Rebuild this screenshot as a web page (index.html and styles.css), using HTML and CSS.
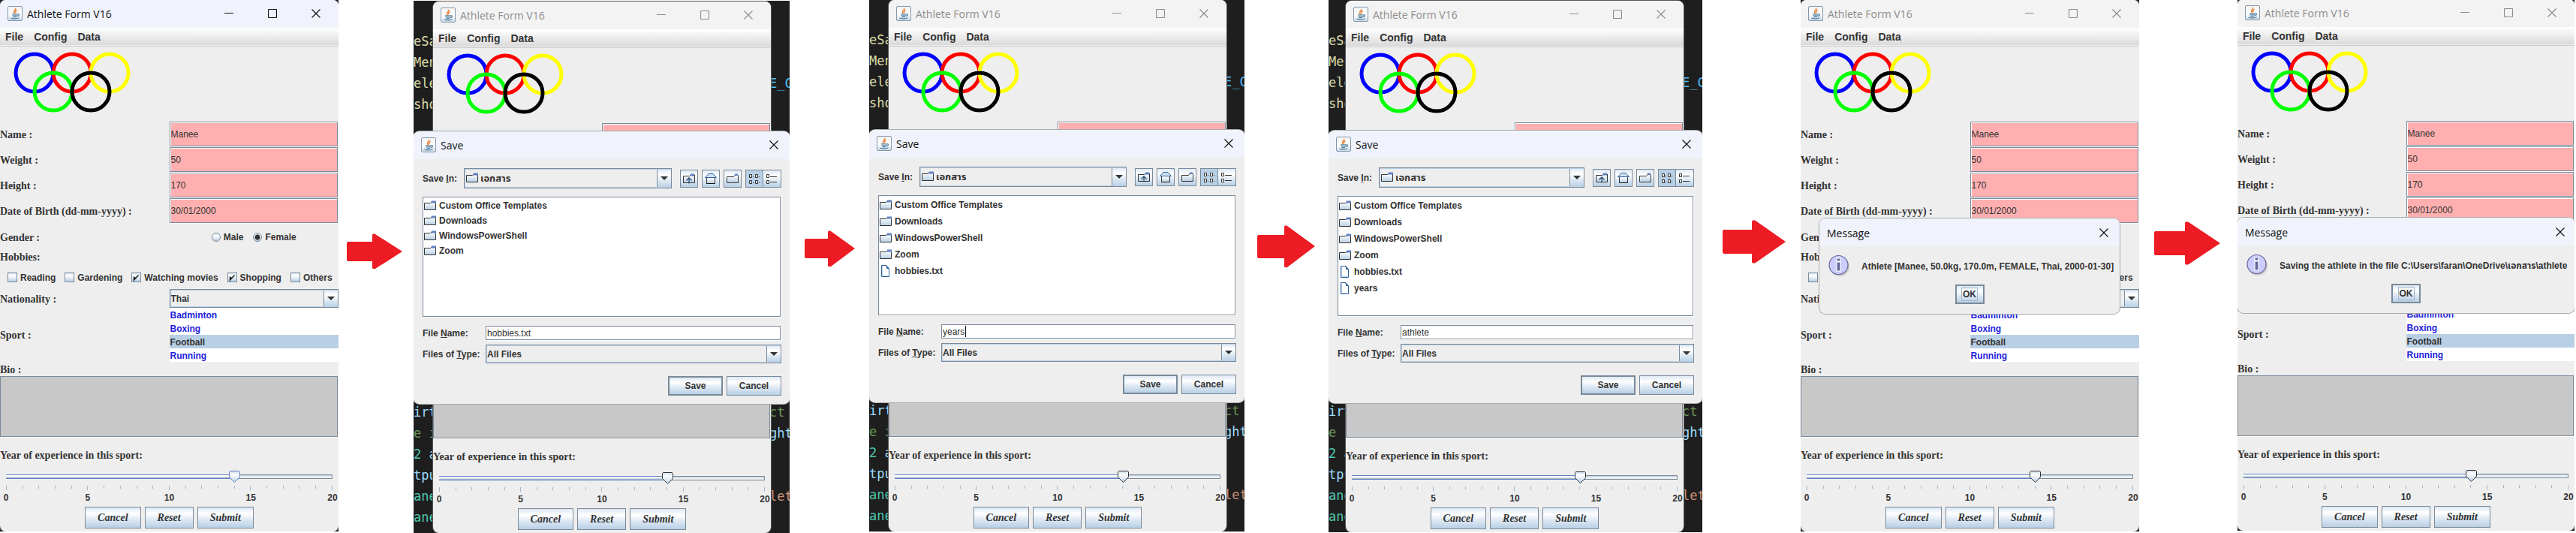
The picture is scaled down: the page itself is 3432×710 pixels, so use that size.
FILE: index.html
```html
<!DOCTYPE html>
<html lang="en">
<head>
<meta charset="utf-8">
<title>Athlete Form V16 - saving an athlete</title>
<link rel="stylesheet" href="styles.css">
</head>
<body>
<svg class="sprite" aria-hidden="true">
  <defs>
    <linearGradient id="g-tile" x1="0" y1="0" x2="0" y2="1"><stop offset="0" stop-color="#f4f4f2"/><stop offset=".6" stop-color="#fdfdfd"/><stop offset="1" stop-color="#c9d6e4"/></linearGradient>
    <linearGradient id="g-folder" x1="0" y1="0" x2="0" y2="1"><stop offset="0" stop-color="#fff"/><stop offset="1" stop-color="#b8cfe5"/></linearGradient>
  </defs>
  <symbol id="java" viewBox="0 0 20 20">
    <rect x=".5" y=".5" width="19" height="19" rx="1.5" fill="url(#g-tile)" stroke="#8398ad"/>
    <path d="M10.5 3c1.500 2-2.500 3-2 5 .2 1 1 1.500 1.200 2.300M12.500 5.500c-2.200 1-2.400 2.200-1.200 3.500" fill="none" stroke="#e8833a" stroke-width="1.500"/>
    <path d="M6 10.800h8M6.500 12.800h6.500M7.500 14.600h4.500M13.500 11c3-.8 2.500 2-.5 2.500" fill="none" stroke="#5382a1" stroke-width="1.300"/>
    <path d="M4.500 16c2 1.200 9 1.200 11-.2" fill="none" stroke="#5382a1" stroke-width="1.200"/>
  </symbol>
  <symbol id="min" viewBox="0 0 12 12"><path d="M0 5.500h12" stroke="currentColor" fill="none"/></symbol>
  <symbol id="max" viewBox="0 0 12 12"><rect x=".5" y=".5" width="11" height="11" rx="1" stroke="currentColor" stroke-width="1.200" fill="none"/></symbol>
  <symbol id="close" viewBox="0 0 12 12"><path d="M.5.5l11 11M11.500.5l-11 11" stroke="currentColor" stroke-width="1.200" fill="none"/></symbol>
  <symbol id="rings" viewBox="0 0 180 100">
    <g fill="none" stroke-width="5">
      <circle cx="46" cy="35" r="25" stroke="#00f"/>
      <circle cx="96" cy="35" r="25" stroke="#f00"/>
      <circle cx="146" cy="35" r="25" stroke="#ff0"/>
      <circle cx="71" cy="60" r="25" stroke="#0f0"/>
      <circle cx="121" cy="60" r="25" stroke="#000"/>
    </g>
  </symbol>
  <symbol id="folder" viewBox="0 0 16 16">
    <path d="M.5 4.500h8l1.500-1.500h5.500v10.500H.5z" fill="url(#g-folder)" stroke="#333"/>
    <path d="M10 1.500h6v3h-7z" fill="#6382bf"/>
  </symbol>
  <symbol id="file" viewBox="0 0 16 16">
    <path d="M2.500.5h6.500l3.500 4v11h-10z" fill="#fff" stroke="#2f619b"/>
    <path d="M3.500 14.500v-13M4 14.500h7.500" stroke="#b8cfe5" fill="none"/>
    <path d="M8.500 1l3.500 4.500M9.500 1v3.500h2.500" stroke="#2f619b" fill="none"/>
  </symbol>
  <symbol id="up" viewBox="0 0 16 16">
    <path d="M.5 4.500h8l1.500-1.500h5.500v10.500H.5z" fill="url(#g-folder)" stroke="#333"/>
    <path d="M10 1.500h5v3h-6z" fill="#6382bf"/>
    <path d="M8 14.500v-7M4.500 10.500l3.500-3.500 3.500 3.500" fill="none" stroke="#2f4f6f" stroke-width="1.300"/>
  </symbol>
  <symbol id="home" viewBox="0 0 16 16">
    <path d="M2.500 7v7.500h11V7" fill="url(#g-folder)" stroke="#333"/>
    <path d="M.5 6.500L5 1.500h6l4.500 5z" fill="#cfe0f0" stroke="#2f619b"/>
    <path d="M2.500 14.500h11" stroke="#111" fill="none"/>
  </symbol>
  <symbol id="newfolder" viewBox="0 0 16 16">
    <path d="M.5 5.500h9l1.500-2h4.500v10H.5z" fill="url(#g-folder)" stroke="#333"/>
    <path d="M11 1.500h4v2.500h-4.500z" fill="#6382bf"/>
  </symbol>
  <symbol id="grid" viewBox="0 0 16 16">
    <path d="M1.500 2.500h3v4h-3zM9.500 2.500h3v4h-3zM1.500 10.500h3v4h-3zM9.500 10.500h3v4h-3z" fill="#fff" stroke="#333"/>
    <path d="M6 5.500h1M14 5.500h1M6 13.500h1M14 13.500h1" stroke="#333"/>
  </symbol>
  <symbol id="rows" viewBox="0 0 16 16">
    <path d="M1.500 2.500h3v4h-3zM1.500 10.500h3v4h-3z" fill="#fff" stroke="#333"/>
    <path d="M6 5.500h9M6 12.500h9" stroke="#333"/>
  </symbol>
  <symbol id="info" viewBox="0 0 32 32">
    <circle cx="15" cy="16" r="13" fill="#888" opacity=".35"/>
    <circle cx="13.500" cy="14" r="12.500" fill="#ccf" stroke="#669" stroke-width="1.200"/>
    <path d="M11 5h5v4h-5zM11 10h5v12h-5z" fill="#669" stroke="#fff" stroke-width="1.200"/>
  </symbol>
</svg>

<main class="flow">

  <section class="stage">
    <article class="window active">
      <header class="titlebar"><svg class="java"><use href="#java"/></svg><h2>Athlete Form V16</h2><button class="ctl" aria-label="Minimize"><svg><use href="#min"/></svg></button><button class="ctl" aria-label="Maximize"><svg><use href="#max"/></svg></button><button class="ctl" aria-label="Close"><svg><use href="#close"/></svg></button></header>
      <nav class="menubar"><button>File</button><button>Config</button><button>Data</button></nav>
      <svg class="rings"><use href="#rings"/></svg>
      <div class="row"><label for="a-name">Name :</label><input id="a-name" class="field" value="Manee"></div>
      <div class="row"><label for="a-weight">Weight :</label><input id="a-weight" class="field" value="50"></div>
      <div class="row"><label for="a-height">Height :</label><input id="a-height" class="field" value="170"></div>
      <div class="row"><label for="a-dob">Date of Birth (dd-mm-yyyy) :</label><input id="a-dob" class="field" value="30/01/2000"></div>
      <div class="row gender"><span>Gender :</span><div class="radios"><label class="opt"><input type="radio" name="a-g">Male</label><label class="opt"><input type="radio" name="a-g" checked>Female</label></div></div>
      <p class="caption hobbies">Hobbies:</p>
      <div class="checks"><label class="opt"><input type="checkbox">Reading</label><label class="opt"><input type="checkbox">Gardening</label><label class="opt"><input type="checkbox" checked>Watching movies</label><label class="opt"><input type="checkbox" checked>Shopping</label><label class="opt"><input type="checkbox">Others</label></div>
      <div class="row nation"><label for="a-nat">Nationality :</label><select id="a-nat" class="combo"><option>Thai</option></select></div>
      <div class="row sport"><span>Sport :</span><ul class="list"><li>Badminton</li><li>Boxing</li><li class="picked">Football</li><li>Running</li></ul></div>
      <label class="caption bio" for="a-bio">Bio :</label>
      <textarea id="a-bio" class="notes"></textarea>
      <label class="caption years" for="a-years">Year of experience in this sport:</label>
      <input id="a-years" class="slider" type="range" min="0" max="20" value="14">
      <div class="ticks"><i></i><i></i><i></i><i></i><i></i><i></i><i></i><i></i><i></i><i></i><i></i><i></i><i></i><i></i><i></i><i></i><i></i><i></i><i></i><i></i><i></i></div>
      <div class="scale"><span>0</span><span>5</span><span>10</span><span>15</span><span>20</span></div>
      <div class="actions"><button class="btn">Cancel</button><button class="btn">Reset</button><button class="btn">Submit</button></div>
    </article>
  </section>

  <div class="arrow a1"><svg width="74" height="48" viewBox="0 0 74 48"><path d="M1 11h33V2q1-3 4-1L74 24 38 47q-3 1-4-1V37H1L0 35V13z"/></svg></div>

  <section class="stage s2">
    <div class="editor">
      <pre class="left-code top"><span class="fn">eSa
Men
ele
sho</span></pre>
      <pre class="right-code top">


<span class="const">E_C</span></pre>
      <pre class="left-code"><span class="var">irt</span>
<span class="cmt">e i</span>
<span class="cls">2 </span><span class="var">a</span>
<span class="var">tpu</span>
<span class="cls">ane
ane</span>
<span class="var"> t</span></pre>
      <pre class="right-code">
<span class="cmt">ct</span>
<span class="var">ght</span>


<span class="str">let</span>
</pre>
    </div>
    <article class="window">
      <header class="titlebar"><svg class="java"><use href="#java"/></svg><h2>Athlete Form V16</h2><button class="ctl" aria-label="Minimize"><svg><use href="#min"/></svg></button><button class="ctl" aria-label="Maximize"><svg><use href="#max"/></svg></button><button class="ctl" aria-label="Close"><svg><use href="#close"/></svg></button></header>
      <nav class="menubar"><button>File</button><button>Config</button><button>Data</button></nav>
      <svg class="rings"><use href="#rings"/></svg>
      <div class="row"><span></span><input class="field" aria-label="Name"></div>
      <div class="under-save"></div>
      <textarea class="notes" aria-label="Bio"></textarea>
      <label class="caption years" for="b-years">Year of experience in this sport:</label>
      <input id="b-years" class="slider" type="range" min="0" max="20" value="14">
      <div class="ticks"><i></i><i></i><i></i><i></i><i></i><i></i><i></i><i></i><i></i><i></i><i></i><i></i><i></i><i></i><i></i><i></i><i></i><i></i><i></i><i></i><i></i></div>
      <div class="scale"><span>0</span><span>5</span><span>10</span><span>15</span><span>20</span></div>
      <div class="actions"><button class="btn">Cancel</button><button class="btn">Reset</button><button class="btn">Submit</button></div>
    </article>
    <form class="dialog save">
      <header class="titlebar"><svg class="java"><use href="#java"/></svg><h2>Save</h2><button type="button" class="ctl" aria-label="Close"><svg><use href="#close"/></svg></button></header>
      <div class="lookin"><label for="b-in">Save <u>I</u>n:</label><div class="place"><svg class="ico"><use href="#folder"/></svg><select id="b-in" class="combo"><option>เอกสาร</option></select></div><div class="tools"><button type="button" aria-label="Up one level"><svg class="ico"><use href="#up"/></svg></button><button type="button" aria-label="Home"><svg class="ico"><use href="#home"/></svg></button><button type="button" aria-label="New folder"><svg class="ico"><use href="#newfolder"/></svg></button><span class="views"><button type="button" class="on" aria-label="List"><svg class="ico"><use href="#grid"/></svg></button><button type="button" aria-label="Details"><svg class="ico"><use href="#rows"/></svg></button></span></div></div>
      <ul class="files tight"><li><svg class="ico"><use href="#folder"/></svg>Custom Office Templates</li><li><svg class="ico"><use href="#folder"/></svg>Downloads</li><li><svg class="ico"><use href="#folder"/></svg>WindowsPowerShell</li><li><svg class="ico"><use href="#folder"/></svg>Zoom</li></ul>
      <div class="pair name"><label for="b-file">File <u>N</u>ame:</label><input id="b-file" class="field plain" value="hobbies.txt"></div>
      <div class="pair"><label for="b-type">Files of <u>T</u>ype:</label><select id="b-type" class="combo"><option>All Files</option></select></div>
      <div class="confirm"><button type="button" class="btn default">Save</button><button type="button" class="btn">Cancel</button></div>
    </form>
  </section>

  <div class="arrow a2"><svg width="67" height="49" viewBox="0 0 67 49"><path d="M1 11h30V2q1-3 4-1L67 24 35 48q-3 1-4-1V37H1L0 35V13z"/></svg></div>

  <section class="stage s3">
    <div class="editor">
      <pre class="left-code top"><span class="fn">eSa
Men
ele
sho</span></pre>
      <pre class="right-code top">


<span class="const">E_C</span></pre>
      <pre class="left-code"><span class="var">irt</span>
<span class="cmt">e i</span>
<span class="cls">2 </span><span class="var">a</span>
<span class="var">tpu</span>
<span class="cls">ane
ane</span>
<span class="var"> t</span></pre>
      <pre class="right-code">
<span class="cmt">ct</span>
<span class="var">ght</span>


<span class="str">let</span>
</pre>
    </div>
    <article class="window">
      <header class="titlebar"><svg class="java"><use href="#java"/></svg><h2>Athlete Form V16</h2><button class="ctl" aria-label="Minimize"><svg><use href="#min"/></svg></button><button class="ctl" aria-label="Maximize"><svg><use href="#max"/></svg></button><button class="ctl" aria-label="Close"><svg><use href="#close"/></svg></button></header>
      <nav class="menubar"><button>File</button><button>Config</button><button>Data</button></nav>
      <svg class="rings"><use href="#rings"/></svg>
      <div class="row"><span></span><input class="field" aria-label="Name"></div>
      <div class="under-save"></div>
      <textarea class="notes" aria-label="Bio"></textarea>
      <label class="caption years" for="c-years">Year of experience in this sport:</label>
      <input id="c-years" class="slider" type="range" min="0" max="20" value="14">
      <div class="ticks"><i></i><i></i><i></i><i></i><i></i><i></i><i></i><i></i><i></i><i></i><i></i><i></i><i></i><i></i><i></i><i></i><i></i><i></i><i></i><i></i><i></i></div>
      <div class="scale"><span>0</span><span>5</span><span>10</span><span>15</span><span>20</span></div>
      <div class="actions"><button class="btn">Cancel</button><button class="btn">Reset</button><button class="btn">Submit</button></div>
    </article>
    <form class="dialog save">
      <header class="titlebar"><svg class="java"><use href="#java"/></svg><h2>Save</h2><button type="button" class="ctl" aria-label="Close"><svg><use href="#close"/></svg></button></header>
      <div class="lookin"><label for="c-in">Save <u>I</u>n:</label><div class="place"><svg class="ico"><use href="#folder"/></svg><select id="c-in" class="combo"><option>เอกสาร</option></select></div><div class="tools"><button type="button" aria-label="Up one level"><svg class="ico"><use href="#up"/></svg></button><button type="button" aria-label="Home"><svg class="ico"><use href="#home"/></svg></button><button type="button" aria-label="New folder"><svg class="ico"><use href="#newfolder"/></svg></button><span class="views"><button type="button" class="on" aria-label="List"><svg class="ico"><use href="#grid"/></svg></button><button type="button" aria-label="Details"><svg class="ico"><use href="#rows"/></svg></button></span></div></div>
      <ul class="files"><li><svg class="ico"><use href="#folder"/></svg>Custom Office Templates</li><li><svg class="ico"><use href="#folder"/></svg>Downloads</li><li><svg class="ico"><use href="#folder"/></svg>WindowsPowerShell</li><li><svg class="ico"><use href="#folder"/></svg>Zoom</li><li><svg class="ico"><use href="#file"/></svg>hobbies.txt</li></ul>
      <div class="pair name"><label for="c-file">File <u>N</u>ame:</label><div class="typing"><input id="c-file" class="field plain" value="years"><i class="caret"></i></div></div>
      <div class="pair"><label for="c-type">Files of <u>T</u>ype:</label><select id="c-type" class="combo"><option>All Files</option></select></div>
      <div class="confirm"><button type="button" class="btn default">Save</button><button type="button" class="btn">Cancel</button></div>
    </form>
  </section>

  <div class="arrow a3"><svg width="77" height="57" viewBox="0 0 77 57"><path d="M1 13h35V2q1-3 4-1L77 28 40 56q-3 1-4-1V44H1L0 42V15z"/></svg></div>

  <section class="stage s4">
    <div class="editor">
      <pre class="left-code top"><span class="fn">eSa
Men
ele
sho</span></pre>
      <pre class="right-code top">


<span class="const">E_C</span></pre>
      <pre class="left-code"><span class="var">irt</span>
<span class="cmt">e i</span>
<span class="cls">2 </span><span class="var">a</span>
<span class="var">tpu</span>
<span class="cls">ane
ane</span>
<span class="var"> t</span></pre>
      <pre class="right-code">
<span class="cmt">ct</span>
<span class="var">ght</span>


<span class="str">let</span>
</pre>
    </div>
    <article class="window">
      <header class="titlebar"><svg class="java"><use href="#java"/></svg><h2>Athlete Form V16</h2><button class="ctl" aria-label="Minimize"><svg><use href="#min"/></svg></button><button class="ctl" aria-label="Maximize"><svg><use href="#max"/></svg></button><button class="ctl" aria-label="Close"><svg><use href="#close"/></svg></button></header>
      <nav class="menubar"><button>File</button><button>Config</button><button>Data</button></nav>
      <svg class="rings"><use href="#rings"/></svg>
      <div class="row"><span></span><input class="field" aria-label="Name"></div>
      <div class="under-save"></div>
      <textarea class="notes" aria-label="Bio"></textarea>
      <label class="caption years" for="d-years">Year of experience in this sport:</label>
      <input id="d-years" class="slider" type="range" min="0" max="20" value="14">
      <div class="ticks"><i></i><i></i><i></i><i></i><i></i><i></i><i></i><i></i><i></i><i></i><i></i><i></i><i></i><i></i><i></i><i></i><i></i><i></i><i></i><i></i><i></i></div>
      <div class="scale"><span>0</span><span>5</span><span>10</span><span>15</span><span>20</span></div>
      <div class="actions"><button class="btn">Cancel</button><button class="btn">Reset</button><button class="btn">Submit</button></div>
    </article>
    <form class="dialog save">
      <header class="titlebar"><svg class="java"><use href="#java"/></svg><h2>Save</h2><button type="button" class="ctl" aria-label="Close"><svg><use href="#close"/></svg></button></header>
      <div class="lookin"><label for="d-in">Save <u>I</u>n:</label><div class="place"><svg class="ico"><use href="#folder"/></svg><select id="d-in" class="combo"><option>เอกสาร</option></select></div><div class="tools"><button type="button" aria-label="Up one level"><svg class="ico"><use href="#up"/></svg></button><button type="button" aria-label="Home"><svg class="ico"><use href="#home"/></svg></button><button type="button" aria-label="New folder"><svg class="ico"><use href="#newfolder"/></svg></button><span class="views"><button type="button" class="on" aria-label="List"><svg class="ico"><use href="#grid"/></svg></button><button type="button" aria-label="Details"><svg class="ico"><use href="#rows"/></svg></button></span></div></div>
      <ul class="files"><li><svg class="ico"><use href="#folder"/></svg>Custom Office Templates</li><li><svg class="ico"><use href="#folder"/></svg>Downloads</li><li><svg class="ico"><use href="#folder"/></svg>WindowsPowerShell</li><li><svg class="ico"><use href="#folder"/></svg>Zoom</li><li><svg class="ico"><use href="#file"/></svg>hobbies.txt</li><li><svg class="ico"><use href="#file"/></svg>years</li></ul>
      <div class="pair name"><label for="d-file">File <u>N</u>ame:</label><input id="d-file" class="field plain" value="athlete"></div>
      <div class="pair"><label for="d-type">Files of <u>T</u>ype:</label><select id="d-type" class="combo"><option>All Files</option></select></div>
      <div class="confirm"><button type="button" class="btn default">Save</button><button type="button" class="btn">Cancel</button></div>
    </form>
  </section>

  <div class="arrow a4"><svg width="84" height="59" viewBox="0 0 84 59"><path d="M1 13h38V2q1-3 5-1L84 29 44 57q-4 2-5-1V45H1L0 43V15z"/></svg></div>

  <section class="stage">
    <article class="window">
      <header class="titlebar"><svg class="java"><use href="#java"/></svg><h2>Athlete Form V16</h2><button class="ctl" aria-label="Minimize"><svg><use href="#min"/></svg></button><button class="ctl" aria-label="Maximize"><svg><use href="#max"/></svg></button><button class="ctl" aria-label="Close"><svg><use href="#close"/></svg></button></header>
      <nav class="menubar"><button>File</button><button>Config</button><button>Data</button></nav>
      <svg class="rings"><use href="#rings"/></svg>
      <div class="row"><label for="e-name">Name :</label><input id="e-name" class="field" value="Manee"></div>
      <div class="row"><label for="e-weight">Weight :</label><input id="e-weight" class="field" value="50"></div>
      <div class="row"><label for="e-height">Height :</label><input id="e-height" class="field" value="170"></div>
      <div class="row"><label for="e-dob">Date of Birth (dd-mm-yyyy) :</label><input id="e-dob" class="field" value="30/01/2000"></div>
      <div class="row gender"><span>Gender :</span></div>
      <p class="caption hobbies">Hobbies:</p>
      <div class="checks"><label class="opt"><input type="checkbox">Reading</label><label class="opt"><input type="checkbox">Gardening</label><label class="opt"><input type="checkbox" checked>Watching movies</label><label class="opt"><input type="checkbox" checked>Shopping</label><label class="opt"><input type="checkbox">Others</label></div>
      <div class="row nation"><label for="e-nat">Nationality :</label><select id="e-nat" class="combo"><option>Thai</option></select></div>
      <div class="row sport"><span>Sport :</span><ul class="list"><li>Badminton</li><li>Boxing</li><li class="picked">Football</li><li>Running</li></ul></div>
      <label class="caption bio" for="e-bio">Bio :</label>
      <textarea id="e-bio" class="notes"></textarea>
      <label class="caption years" for="e-years">Year of experience in this sport:</label>
      <input id="e-years" class="slider" type="range" min="0" max="20" value="14">
      <div class="ticks"><i></i><i></i><i></i><i></i><i></i><i></i><i></i><i></i><i></i><i></i><i></i><i></i><i></i><i></i><i></i><i></i><i></i><i></i><i></i><i></i><i></i></div>
      <div class="scale"><span>0</span><span>5</span><span>10</span><span>15</span><span>20</span></div>
      <div class="actions"><button class="btn">Cancel</button><button class="btn">Reset</button><button class="btn">Submit</button></div>
    </article>
    <section class="dialog message">
      <header class="titlebar"><h2>Message</h2><button class="ctl" aria-label="Close"><svg><use href="#close"/></svg></button></header>
      <div class="note"><svg class="info"><use href="#info"/></svg><p>Athlete [Manee, 50.0kg, 170.0m, FEMALE, Thai, 2000-01-30]</p></div>
      <button class="btn default ok"><span>OK</span></button>
    </section>
  </section>

  <div class="arrow a5"><svg width="88" height="59" viewBox="0 0 88 59"><path d="M1 13h40V2q1-3 5-1L88 29 46 57q-4 2-5-1V45H1L0 43V15z"/></svg></div>

  <section class="stage s6">
    <article class="window">
      <header class="titlebar"><svg class="java"><use href="#java"/></svg><h2>Athlete Form V16</h2><button class="ctl" aria-label="Minimize"><svg><use href="#min"/></svg></button><button class="ctl" aria-label="Maximize"><svg><use href="#max"/></svg></button><button class="ctl" aria-label="Close"><svg><use href="#close"/></svg></button></header>
      <nav class="menubar"><button>File</button><button>Config</button><button>Data</button></nav>
      <svg class="rings"><use href="#rings"/></svg>
      <div class="row"><label for="f-name">Name :</label><input id="f-name" class="field" value="Manee"></div>
      <div class="row"><label for="f-weight">Weight :</label><input id="f-weight" class="field" value="50"></div>
      <div class="row"><label for="f-height">Height :</label><input id="f-height" class="field" value="170"></div>
      <div class="row"><label for="f-dob">Date of Birth (dd-mm-yyyy) :</label><input id="f-dob" class="field" value="30/01/2000"></div>
      <div class="under-message"></div>
      <div class="row sport"><span>Sport :</span><ul class="list"><li>Badminton</li><li>Boxing</li><li class="picked">Football</li><li>Running</li></ul></div>
      <label class="caption bio" for="f-bio">Bio :</label>
      <textarea id="f-bio" class="notes"></textarea>
      <label class="caption years" for="f-years">Year of experience in this sport:</label>
      <input id="f-years" class="slider" type="range" min="0" max="20" value="14">
      <div class="ticks"><i></i><i></i><i></i><i></i><i></i><i></i><i></i><i></i><i></i><i></i><i></i><i></i><i></i><i></i><i></i><i></i><i></i><i></i><i></i><i></i><i></i></div>
      <div class="scale"><span>0</span><span>5</span><span>10</span><span>15</span><span>20</span></div>
      <div class="actions"><button class="btn">Cancel</button><button class="btn">Reset</button><button class="btn">Submit</button></div>
    </article>
    <section class="dialog message wide">
      <header class="titlebar"><h2>Message</h2><button class="ctl" aria-label="Close"><svg><use href="#close"/></svg></button></header>
      <div class="note"><svg class="info"><use href="#info"/></svg><p>Saving the athlete in the file C:\Users\faran\OneDrive\เอกสาร\athlete</p></div>
      <button class="btn default ok"><span>OK</span></button>
    </section>
  </section>

</main>
</body>
</html>
```
FILE: styles.css
```css
* { box-sizing: border-box; }

body {
  margin: 0;
  background: #fff;
  color: #333;
  font: bold 12px/16px "Liberation Sans", "Noto Sans Thai", sans-serif;
}

h2, p, ul, pre { margin: 0; padding: 0; }
ul { list-style: none; }
button, input, select, textarea { font: inherit; color: inherit; margin: 0; border-radius: 0; }
.sprite { position: absolute; width: 0; height: 0; }

.flow {
  display: grid;
  grid-template-columns: 451fr 100fr 501fr 106fr 500fr 112fr 498fr 131fr 451fr 131fr 449fr;
  align-items: start;
  padding-right: 2px;
}

/* One captured moment: a dark desktop with a window on it */
.stage {
  position: relative;
  display: grid;
  min-width: 0;
  overflow: hidden;
  background: #1e1e1e;
}
.stage > .editor, .stage > .window { grid-area: 1 / 1; min-width: 0; }
.s2 { margin-top: 1px; padding-top: 1px; }
.s4 { padding-top: 1px; }
.s2 > .window { margin: 0 25px 0 26px; }
.s3 > .window { margin: 0 24px 0 26px; }
.s4 > .window { margin: 0 25px 0 23px; }
.s6 > .window { margin-top: -1px; }

/* Source code peeping out beside the window */
.editor {
  display: grid;
  grid-template-columns: 1fr 27px;
  grid-template-rows: 533px 1fr;
  height: 0;
  font: 17px/28px "DejaVu Sans Mono", monospace;
}
.left-code, .right-code { font: inherit; overflow: hidden; height: 174px; }
.left-code.top, .right-code.top { padding-top: 39px; }
.fn { color: #dcdcaa; }
.const { color: #4fc1ff; }
.var { color: #9cdcfe; }
.cmt { color: #6a9955; }
.cls { color: #4ec9b0; }
.str { color: #ce9178; }

.arrow svg { display: block; fill: #ed1c24; }
.a1 { padding: 311px 0 0 11px; }
.a2 { padding: 307px 0 0 20px; }
.a3 { padding: 300px 0 0 17px; }
.a4 { padding: 293px 0 0 27px; }
.a5 { padding: 295px 0 0 20px; }

/* Windows */
.window {
  position: relative;
  display: flex;
  flex-direction: column;
  overflow: hidden;
  background: #eee;
  border-radius: 8px;
  box-shadow: 0 0 0 1px #555;
}
.titlebar {
  display: flex;
  align-items: center;
  height: 37px;
  padding: 0 24px 2px 10px;
  background: #f3f3f3;
  color: #8d8d8d;
}
.active .titlebar, .dialog .titlebar { background: #f0f3fb; color: #111; }
.titlebar h2 { flex: 1; padding-top: 2px; font: 14px/20px "Open Sans", sans-serif; }
.java { width: 20px; height: 20px; margin-right: 6px; }
.ctl { width: 12px; height: 12px; margin-left: 46px; padding: 0; border: 0; background: none; }
.ctl svg { display: block; width: 12px; height: 12px; }
.menubar {
  display: flex;
  gap: 14px;
  height: 25px;
  padding: 0 7px 1px;
  background: linear-gradient(#fff, #dadada 23px, #eee 23px);
  border-bottom: 1px solid #ccc;
}
.menubar button { padding: 0; border: 0; background: none; font-size: 14px; line-height: 22px; }
.rings { width: 180px; height: 100px; }

.row { display: grid; grid-template-columns: 1fr 1fr; align-items: center; height: 34px; }
.row > label, .row > span, .caption { padding-top: 2px; font: bold 14px/18px "Liberation Serif", serif; }
.field {
  width: calc(100% - 1px);
  height: 33px;
  margin-bottom: 1px;
  padding: 0 1px;
  border: 1px solid #7a8a99;
  outline: 0;
  background: #ffafaf;
  box-shadow: inset 1px 1px #fff, 1px 1px #fff;
  font-weight: normal;
}
.opt { display: flex; align-items: center; gap: 4px; white-space: nowrap; }
.opt input {
  appearance: none;
  width: 13px;
  height: 13px;
  border: 1px solid #7a8a99;
  background: linear-gradient(#dde8f3, #fff 30%, #b8cfe5);
}
.opt input[type="radio"] { width: 12px; height: 12px; border-radius: 50%; }
.opt input[type="radio"]:checked { background: radial-gradient(circle, #333 3px, transparent 4px), linear-gradient(#dde8f3, #fff 30%, #b8cfe5); }
.opt input[type="checkbox"]:checked {
  background: url("data:image/svg+xml,%3Csvg xmlns='http://www.w3.org/2000/svg' viewBox='0 0 11 11'%3E%3Cpath d='M2.500 4.500v4.500L8.500 2.500M3.500 5v3' fill='none' stroke='%23222' stroke-width='1.600'/%3E%3C/svg%3E") center / 11px 11px, linear-gradient(#dde8f3, #fff 30%, #b8cfe5);
}
.gender { height: 36px; }
.radios { display: flex; gap: 13px; justify-content: center; }
.hobbies { height: 18px; padding-top: 0; }
.checks { display: flex; align-items: center; gap: 12px; height: 33px; padding: 2px 0 0 10px; }
.nation { height: 25px; }
.combo {
  appearance: none;
  width: 100%;
  height: 25px;
  padding: 0 20px 0 1px;
  border: 1px solid #7a8a99;
  outline: 0;
  background:
    url("data:image/svg+xml,%3Csvg xmlns='http://www.w3.org/2000/svg' viewBox='0 0 10 5'%3E%3Cpath d='M0 0h10L5 5z' fill='%23333'/%3E%3C/svg%3E") right 4px center / 10px 5px no-repeat,
    linear-gradient(#dde8f3, #fff 30%, #b8cfe5) right / 18px 100% no-repeat,
    linear-gradient(#7a8a99, #7a8a99) right 18px top / 1px 100% no-repeat,
    #eee;
  box-shadow: inset 1px 1px #b8cfe5, inset 0 -1px #b8cfe5;
}
.sport { height: 72px; }
.list { background: #fff; color: #2222dd; line-height: 18px; }
.list li { height: 18px; padding-left: 1px; line-height: 20px; }
.list .picked { background: #b8cfe5; color: #333; }
.bio { height: 19px; }
.notes {
  height: 81px;
  margin: 0 1px 1px 0;
  border: 1px solid #7a8a99;
  outline: 0;
  resize: none;
  background: #c8c8c8;
  box-shadow: 0 1px #fff;
}
.years { height: 44px; padding-top: 15px; }
.slider {
  appearance: none;
  width: 100%;
  height: 16px;
  outline: 0;
  background:
    linear-gradient(#6382bf 1px, #fff 1px 3px, #a3b8cc 4px 5px, #6382bf 5px) 8px center / 69% 6px no-repeat,
    linear-gradient(#7a8a99, #7a8a99) right 8px center / 1px 6px no-repeat,
    linear-gradient(#7a8a99 1px, #b8cfe5 1px 2px, #eee 2px 5px, #7a8a99 5px) 8px center / calc(100% - 16px) 6px no-repeat;
}
.slider::-webkit-slider-thumb {
  appearance: none;
  width: 15px;
  height: 16px;
  background: url("data:image/svg+xml,%3Csvg xmlns='http://www.w3.org/2000/svg' viewBox='0 0 15 16'%3E%3ClinearGradient id='g' x2='0' y2='1'%3E%3Cstop stop-color='%23c8daec'/%3E%3Cstop offset='.3' stop-color='%23fff'/%3E%3Cstop offset='1' stop-color='%23b8cfe5'/%3E%3C/linearGradient%3E%3Cpath d='M1.500.5h12l1 1v7l-7 7-7-7v-7z' fill='url(%23g)' stroke='%23333'/%3E%3C/svg%3E") center / 15px 16px;
}
.active .slider::-webkit-slider-thumb {
  background-image: url("data:image/svg+xml,%3Csvg xmlns='http://www.w3.org/2000/svg' viewBox='0 0 15 16'%3E%3ClinearGradient id='g' x2='0' y2='1'%3E%3Cstop stop-color='%23c8daec'/%3E%3Cstop offset='.3' stop-color='%23fff'/%3E%3Cstop offset='1' stop-color='%23b8cfe5'/%3E%3C/linearGradient%3E%3Cpath d='M1.500.5h12l1 1v7l-7 7-7-7v-7z' fill='url(%23g)' stroke='%236382bf'/%3E%3C/svg%3E");
}
.ticks { display: flex; justify-content: space-between; height: 10px; padding: 4px 8px 0; }
.ticks i { width: 1px; height: 4px; background: #a3b8cc; }
.ticks i:nth-child(5n + 1) { height: 6px; }
.scale { display: flex; justify-content: space-between; padding: 0 1px; line-height: 20px; }
.scale span { width: 14px; text-align: center; }
.actions { display: flex; justify-content: center; gap: 5px; padding: 2px 0 4px; }
.btn {
  height: 26px;
  padding: 0 16px;
  border: 1px solid #7a8a99;
  background: linear-gradient(#dde8f3, #fff 30%, #dde8f3 60%, #b8cfe5);
}
.default { border-width: 2px; }
.actions .btn { height: 29px; font: italic bold 14px/18px "Liberation Serif", serif; }

.under-save { height: 305px; }
.under-message { height: 112px; }

/* Dialogs over a window */
.dialog {
  position: absolute;
  overflow: hidden;
  background: #eee;
  border-radius: 8px;
  box-shadow: 0 0 0 1px #aaa;
}
.dialog .titlebar { padding-right: 15px; }
.save { top: 173px; left: 0; right: 0; }
.s2 .save, .s4 .save { top: 174px; }
.lookin { display: flex; align-items: center; gap: 11px; padding: 12px 11px 0 12px; height: 39px; }
.lookin label { width: 44px; white-space: nowrap; }
.place { position: relative; flex: 1; }
.place .combo { display: block; height: 27px; padding-left: 21px; font-size: 13px; }
.place .ico { position: absolute; left: 3px; top: 5px; }
.ico { display: block; width: 16px; height: 16px; }
.tools { display: flex; gap: 5px; }
.tools button {
  width: 24px;
  height: 24px;
  padding: 3px;
  border: 1px solid #7a8a99;
  background: linear-gradient(#dde8f3, #fff 30%, #b8cfe5);
}
.tools .on { background: #b8cfe5; }
.views { display: flex; }
.views button + button { border-left: 0; }
.files {
  height: 160px;
  margin: 11px 12px 12px;
  padding: 1px;
  border: 1px solid #7a8a99;
  background: #fff;
  box-shadow: 1px 1px #fff;
}
.files li { display: flex; align-items: center; gap: 4px; height: 22px; }
.files.tight li { height: 20px; }
.pair { display: grid; grid-template-columns: 84px 1fr; align-items: center; padding: 0 11px 0 12px; }
.pair .plain { display: block; height: 19px; margin: 0; background: #fff; }
.name { padding-bottom: 6px; }
.typing { position: relative; }
.caret { position: absolute; left: 32px; top: 2px; width: 1px; height: 15px; background: #111; }
.confirm { display: flex; justify-content: flex-end; gap: 5px; padding: 17px 11px 11px; }
.confirm .btn { width: 73px; padding: 0; }

.message { top: 291px; left: 25px; right: 26px; padding-bottom: 13px; }
.message .titlebar { height: 37px; padding-bottom: 0; }
.wide { top: 290px; left: 0; right: 0; }
.wide .titlebar { padding-right: 13px; }
.note { display: flex; align-items: center; gap: 12px; height: 51px; padding: 3px 0 0 12px; }
.note p { white-space: nowrap; }
.info { flex: none; width: 32px; height: 32px; }
.ok { display: block; width: 39px; margin: 0 auto; padding: 0; }
.ok span { display: inline-block; padding: 0 1px; outline: 1px solid #a3b8cc; line-height: 16px; }
```
